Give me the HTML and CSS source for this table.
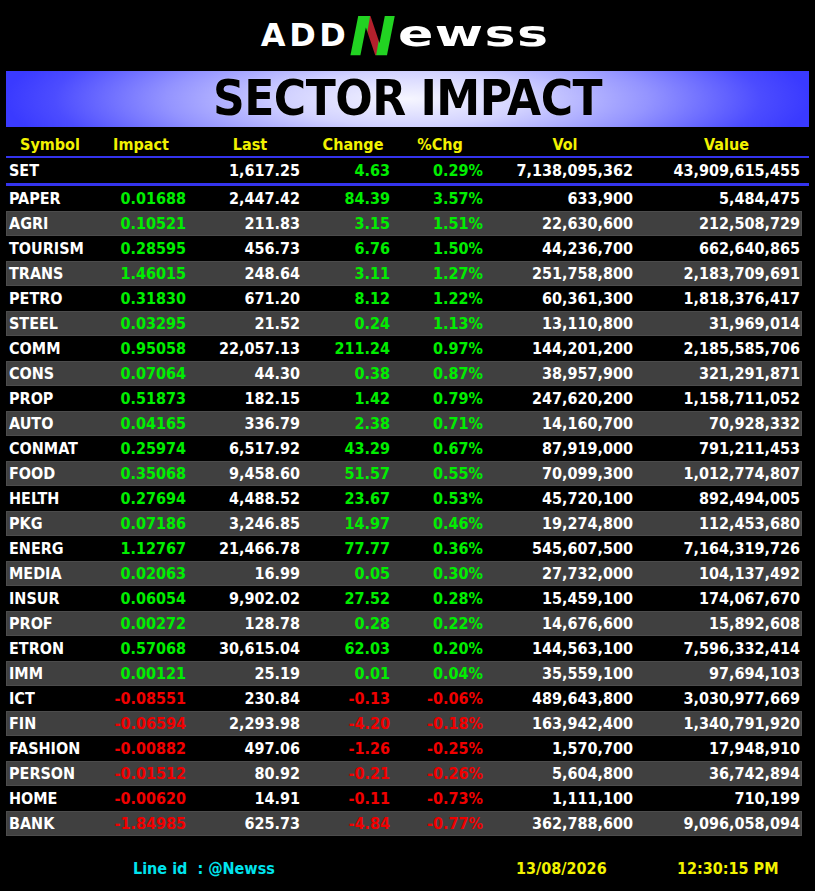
FILE: index.html
```html
<!DOCTYPE html>
<html>
<head>
<meta charset="utf-8">
<link rel="stylesheet" href="styles.css">
</head>
<body>
<div class="page">
  <div class="logo">
    <span class="l-add">ADD</span><span class="l-n">N</span><span class="l-ewss"><span class="l-ewss-in">ewss</span></span>
  </div>
  <div class="banner"><h1 class="title">SECTOR IMPACT</h1></div>
  <div class="tbl">
    <div class="row head">
      <div>Symbol</div><div>Impact</div><div>Last</div><div>Change</div><div>%Chg</div><div>Vol</div><div>Value</div>
    </div>
    <div class="rule thin"></div>
    <div class="row data set up">
      <div class="sym">SET</div><div class="imp"></div><div class="last">1,617.25</div><div class="chg">4.63</div><div class="pct">0.29%</div><div class="vol">7,138,095,362</div><div class="val">43,909,615,455</div>
    </div>
    <div class="rule thick"></div>
    <div class="body">
      <div class="row data up"><div class="sym">PAPER</div><div class="imp">0.01688</div><div class="last">2,447.42</div><div class="chg">84.39</div><div class="pct">3.57%</div><div class="vol">633,900</div><div class="val">5,484,475</div></div>
      <div class="row data up"><div class="sym">AGRI</div><div class="imp">0.10521</div><div class="last">211.83</div><div class="chg">3.15</div><div class="pct">1.51%</div><div class="vol">22,630,600</div><div class="val">212,508,729</div></div>
      <div class="row data up"><div class="sym">TOURISM</div><div class="imp">0.28595</div><div class="last">456.73</div><div class="chg">6.76</div><div class="pct">1.50%</div><div class="vol">44,236,700</div><div class="val">662,640,865</div></div>
      <div class="row data up"><div class="sym">TRANS</div><div class="imp">1.46015</div><div class="last">248.64</div><div class="chg">3.11</div><div class="pct">1.27%</div><div class="vol">251,758,800</div><div class="val">2,183,709,691</div></div>
      <div class="row data up"><div class="sym">PETRO</div><div class="imp">0.31830</div><div class="last">671.20</div><div class="chg">8.12</div><div class="pct">1.22%</div><div class="vol">60,361,300</div><div class="val">1,818,376,417</div></div>
      <div class="row data up"><div class="sym">STEEL</div><div class="imp">0.03295</div><div class="last">21.52</div><div class="chg">0.24</div><div class="pct">1.13%</div><div class="vol">13,110,800</div><div class="val">31,969,014</div></div>
      <div class="row data up"><div class="sym">COMM</div><div class="imp">0.95058</div><div class="last">22,057.13</div><div class="chg">211.24</div><div class="pct">0.97%</div><div class="vol">144,201,200</div><div class="val">2,185,585,706</div></div>
      <div class="row data up"><div class="sym">CONS</div><div class="imp">0.07064</div><div class="last">44.30</div><div class="chg">0.38</div><div class="pct">0.87%</div><div class="vol">38,957,900</div><div class="val">321,291,871</div></div>
      <div class="row data up"><div class="sym">PROP</div><div class="imp">0.51873</div><div class="last">182.15</div><div class="chg">1.42</div><div class="pct">0.79%</div><div class="vol">247,620,200</div><div class="val">1,158,711,052</div></div>
      <div class="row data up"><div class="sym">AUTO</div><div class="imp">0.04165</div><div class="last">336.79</div><div class="chg">2.38</div><div class="pct">0.71%</div><div class="vol">14,160,700</div><div class="val">70,928,332</div></div>
      <div class="row data up"><div class="sym">CONMAT</div><div class="imp">0.25974</div><div class="last">6,517.92</div><div class="chg">43.29</div><div class="pct">0.67%</div><div class="vol">87,919,000</div><div class="val">791,211,453</div></div>
      <div class="row data up"><div class="sym">FOOD</div><div class="imp">0.35068</div><div class="last">9,458.60</div><div class="chg">51.57</div><div class="pct">0.55%</div><div class="vol">70,099,300</div><div class="val">1,012,774,807</div></div>
      <div class="row data up"><div class="sym">HELTH</div><div class="imp">0.27694</div><div class="last">4,488.52</div><div class="chg">23.67</div><div class="pct">0.53%</div><div class="vol">45,720,100</div><div class="val">892,494,005</div></div>
      <div class="row data up"><div class="sym">PKG</div><div class="imp">0.07186</div><div class="last">3,246.85</div><div class="chg">14.97</div><div class="pct">0.46%</div><div class="vol">19,274,800</div><div class="val">112,453,680</div></div>
      <div class="row data up"><div class="sym">ENERG</div><div class="imp">1.12767</div><div class="last">21,466.78</div><div class="chg">77.77</div><div class="pct">0.36%</div><div class="vol">545,607,500</div><div class="val">7,164,319,726</div></div>
      <div class="row data up"><div class="sym">MEDIA</div><div class="imp">0.02063</div><div class="last">16.99</div><div class="chg">0.05</div><div class="pct">0.30%</div><div class="vol">27,732,000</div><div class="val">104,137,492</div></div>
      <div class="row data up"><div class="sym">INSUR</div><div class="imp">0.06054</div><div class="last">9,902.02</div><div class="chg">27.52</div><div class="pct">0.28%</div><div class="vol">15,459,100</div><div class="val">174,067,670</div></div>
      <div class="row data up"><div class="sym">PROF</div><div class="imp">0.00272</div><div class="last">128.78</div><div class="chg">0.28</div><div class="pct">0.22%</div><div class="vol">14,676,600</div><div class="val">15,892,608</div></div>
      <div class="row data up"><div class="sym">ETRON</div><div class="imp">0.57068</div><div class="last">30,615.04</div><div class="chg">62.03</div><div class="pct">0.20%</div><div class="vol">144,563,100</div><div class="val">7,596,332,414</div></div>
      <div class="row data up"><div class="sym">IMM</div><div class="imp">0.00121</div><div class="last">25.19</div><div class="chg">0.01</div><div class="pct">0.04%</div><div class="vol">35,559,100</div><div class="val">97,694,103</div></div>
      <div class="row data down"><div class="sym">ICT</div><div class="imp">-0.08551</div><div class="last">230.84</div><div class="chg">-0.13</div><div class="pct">-0.06%</div><div class="vol">489,643,800</div><div class="val">3,030,977,669</div></div>
      <div class="row data down"><div class="sym">FIN</div><div class="imp">-0.06594</div><div class="last">2,293.98</div><div class="chg">-4.20</div><div class="pct">-0.18%</div><div class="vol">163,942,400</div><div class="val">1,340,791,920</div></div>
      <div class="row data down"><div class="sym">FASHION</div><div class="imp">-0.00882</div><div class="last">497.06</div><div class="chg">-1.26</div><div class="pct">-0.25%</div><div class="vol">1,570,700</div><div class="val">17,948,910</div></div>
      <div class="row data down"><div class="sym">PERSON</div><div class="imp">-0.01512</div><div class="last">80.92</div><div class="chg">-0.21</div><div class="pct">-0.26%</div><div class="vol">5,604,800</div><div class="val">36,742,894</div></div>
      <div class="row data down"><div class="sym">HOME</div><div class="imp">-0.00620</div><div class="last">14.91</div><div class="chg">-0.11</div><div class="pct">-0.73%</div><div class="vol">1,111,100</div><div class="val">710,199</div></div>
      <div class="row data down"><div class="sym">BANK</div><div class="imp">-1.84985</div><div class="last">625.73</div><div class="chg">-4.84</div><div class="pct">-0.77%</div><div class="vol">362,788,600</div><div class="val">9,096,058,094</div></div>
    </div>
  </div>
  <div class="footer">
    <div></div>
    <div class="line-id">Line id&nbsp; : @Newss</div>
    <div class="date">13/08/2026</div>
    <div class="time">12:30:15 PM</div>
  </div>
</div>
</body>
</html>
```
FILE: styles.css
```css
html, body {
  margin: 0;
  padding: 0;
  background: #000;
}
body {
  width: 815px;
  height: 891px;
  overflow: hidden;
  color: #fff;
  font-family: "DejaVu Sans Condensed", "DejaVu Sans", sans-serif;
  font-stretch: condensed;
  font-weight: bold;
  font-size: 16px;
}
.page {
  display: flex;
  flex-direction: column;
}

/* logo */
.logo {
  height: 71px;
  box-sizing: border-box;
  padding-top: 7px;
  padding-left: 2px;
  display: flex;
  justify-content: center;
  align-items: baseline;
  line-height: 40px;
  font-family: "DejaVu Sans", sans-serif;
  font-stretch: normal;
  font-weight: bold;
  color: #fff;
}
.l-add {
  font-size: 32px;
  letter-spacing: 3.5px;
}
.l-n {
  font-size: 56px;
  font-style: italic;
  margin: 0 2px 0 0;
  position: relative;
  top: 9px;
  background: linear-gradient(100deg, #22d322 0%, #22d322 38%, #b3202c 40%, #b3202c 62%, #22d322 64%, #22d322 100%);
  -webkit-background-clip: text;
  background-clip: text;
  color: transparent;
}
.l-ewss {
  display: inline-block;
  width: 158px;
  font-size: 36px;
}
.l-ewss-in {
  display: inline-block;
  transform: scaleX(1.45);
  transform-origin: left center;
  letter-spacing: 1px;
}

/* banner */
.banner {
  margin: 0 6px;
  width: 803px;
  height: 56px;
  background: radial-gradient(ellipse 50% 160% at 50% 50%, #f6f6ff 0%, #d2d2ff 30%, #9494ff 60%, #4c4cff 88%, #3a3aff 100%);
  display: flex;
  align-items: center;
  justify-content: center;
}
.title {
  margin: 0;
  font-size: 49px;
  line-height: 56px;
  color: #000;
  font-weight: bold;
  letter-spacing: -0.5px;
  text-shadow: 0 0 1px rgba(255,255,255,0.6);
}

/* table */
.tbl {
  margin-left: 6px;
  width: 803px;
  display: flex;
  flex-direction: column;
}
.row {
  display: grid;
  grid-template-columns: 88px 94px 124px 82px 92px 158px 158px;
  line-height: 25px;
  height: 25px;
  white-space: nowrap;
}
.head {
  grid-template-columns: 88px 94px 124px 82px 92px 158px 165px;
  color: #f2f200;
  text-align: center;
  padding-top: 5px;
  height: 24px;
}
.rule {
  width: 803px;
  background: #3434ee;
}
.rule.thin {
  height: 2px;
}
.rule.thick {
  height: 3px;
}
.body {
  display: flex;
  flex-direction: column;
  width: 796px;
}
.data > div {
  text-align: right;
}
.data > .sym {
  text-align: left;
  padding-left: 3px;
}
.imp { padding-right: 2px; }
.last { padding-right: 12px; }
.chg { padding-right: 4px; }
.pct { padding-right: 3px; }
.vol { padding-right: 11px; }
.val { padding-right: 2px; }

.body .row:nth-child(even) {
  background: #404040;
  box-shadow: inset 0 0 0 1px #4c4c4c;
}
.up .imp, .up .chg, .up .pct { color: #00ee00; }
.down .imp, .down .chg, .down .pct { color: #f00000; }

/* footer */
.footer {
  margin-top: 20px;
  display: grid;
  grid-template-columns: 133px 383px 161px auto;
  line-height: 25px;
}
.line-id { color: #00e4ee; }
.date, .time { color: #f2f200; }
```
